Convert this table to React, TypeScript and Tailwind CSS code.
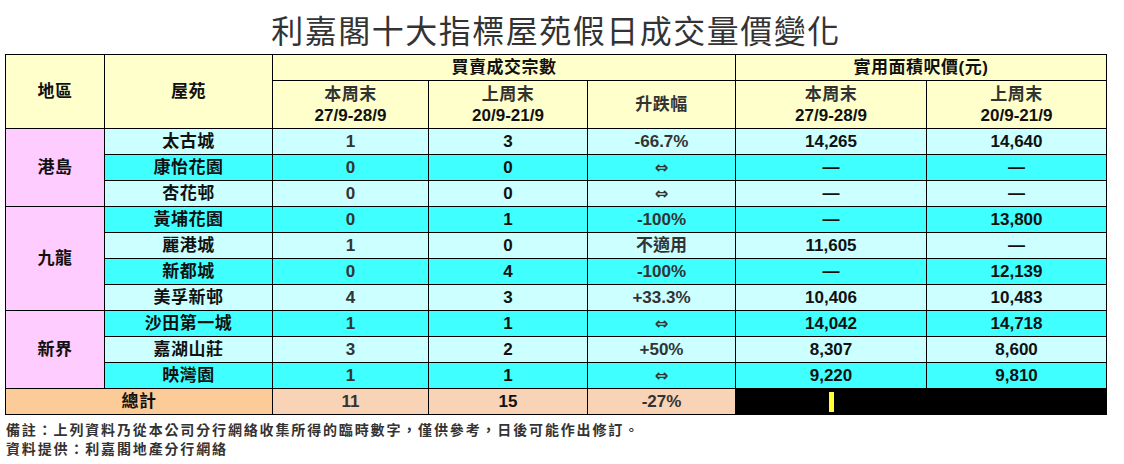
import React from 'react';

interface Row {
  region?: string;
  span?: number;
  name: string;
  thisWk: string;
  lastWk: string;
  change: string;
  priceNow: string;
  priceLast: string;
}

const rows: Row[] = [
  { region: '港島', span: 3, name: '太古城', thisWk: '1', lastWk: '3', change: '-66.7%', priceNow: '14,265', priceLast: '14,640' },
  { name: '康怡花園', thisWk: '0', lastWk: '0', change: '⇔', priceNow: '—', priceLast: '—' },
  { name: '杏花邨', thisWk: '0', lastWk: '0', change: '⇔', priceNow: '—', priceLast: '—' },
  { region: '九龍', span: 4, name: '黃埔花園', thisWk: '0', lastWk: '1', change: '-100%', priceNow: '—', priceLast: '13,800' },
  { name: '麗港城', thisWk: '1', lastWk: '0', change: '不適用', priceNow: '11,605', priceLast: '—' },
  { name: '新都城', thisWk: '0', lastWk: '4', change: '-100%', priceNow: '—', priceLast: '12,139' },
  { name: '美孚新邨', thisWk: '4', lastWk: '3', change: '+33.3%', priceNow: '10,406', priceLast: '10,483' },
  { region: '新界', span: 3, name: '沙田第一城', thisWk: '1', lastWk: '1', change: '⇔', priceNow: '14,042', priceLast: '14,718' },
  { name: '嘉湖山莊', thisWk: '3', lastWk: '2', change: '+50%', priceNow: '8,307', priceLast: '8,600' },
  { name: '映灣園', thisWk: '1', lastWk: '1', change: '⇔', priceNow: '9,220', priceLast: '9,810' },
];

const cell = 'border border-black text-center align-middle p-0';

export default function App() {
  return (
    <div className="w-[1124px] h-[464px] bg-white font-['Liberation_Sans','Noto_Sans_CJK_TC',sans-serif] text-[#111]">
      <div className="h-[54px] flex items-center justify-center pt-[4px] pr-[12px]">
        <h1 className="text-[32px] font-normal tracking-[1.5px] text-[#333] font-['Noto_Sans_CJK_TC',sans-serif] leading-none">
          利嘉閣十大指標屋苑假日成交量價變化
        </h1>
      </div>

      <table className="ml-[5px] w-[1102px] table-fixed border-collapse text-[17px] font-bold leading-none">
        <colgroup>
          <col className="w-[99px]" />
          <col className="w-[168px]" />
          <col className="w-[156px]" />
          <col className="w-[159px]" />
          <col className="w-[148px]" />
          <col className="w-[191px]" />
          <col className="w-[180px]" />
        </colgroup>
        <thead className="bg-[#FFFFCC]">
          <tr className="h-[26px]">
            <th rowSpan={2} className={`${cell} tracking-[0.5px]`}>地區</th>
            <th rowSpan={2} className={`${cell} tracking-[0.5px]`}>屋苑</th>
            <th colSpan={3} className={`${cell} tracking-[0.5px]`}>買賣成交宗數</th>
            <th colSpan={2} className={`${cell} tracking-[0.5px]`}>實用面積呎價(元)</th>
          </tr>
          <tr className="h-[48px]">
            <th className={cell}>
              <div className="text-[#333] tracking-[0.5px] mb-[4px]">本周末</div>
              <div>27/9-28/9</div>
            </th>
            <th className={cell}>
              <div className="text-[#333] tracking-[0.5px] mb-[4px]">上周末</div>
              <div>20/9-21/9</div>
            </th>
            <th className={`${cell} text-[#333] tracking-[0.5px]`}>升跌幅</th>
            <th className={cell}>
              <div className="text-[#333] tracking-[0.5px] mb-[4px]">本周末</div>
              <div>27/9-28/9</div>
            </th>
            <th className={cell}>
              <div className="text-[#333] tracking-[0.5px] mb-[4px]">上周末</div>
              <div>20/9-21/9</div>
            </th>
          </tr>
        </thead>
        <tbody>
          {rows.map((r, i) => {
            const bg = i % 2 === 0 ? 'bg-[#CCFFFF]' : 'bg-[#40FFFF]';
            const isArrow = r.change === '⇔';
            return (
              <tr key={r.name} className="h-[26px]">
                {r.region && (
                  <td rowSpan={r.span} className={`${cell} bg-[#FFCCFF] tracking-[0.5px]`}>
                    {r.region}
                  </td>
                )}
                <td className={`${cell} ${bg} tracking-[0.5px]`}>{r.name}</td>
                <td className={`${cell} ${bg} text-[#333]`}>{r.thisWk}</td>
                <td className={`${cell} ${bg}`}>{r.lastWk}</td>
                <td className={`${cell} ${bg} text-[#333] ${isArrow ? "text-[16px] font-['DejaVu_Sans',sans-serif]" : ''}`}>
                  {r.change}
                </td>
                <td className={`${cell} ${bg}`}>{r.priceNow}</td>
                <td className={`${cell} ${bg}`}>{r.priceLast}</td>
              </tr>
            );
          })}
          <tr className="h-[26px]">
            <td colSpan={2} className={`${cell} bg-[#FBCB98] tracking-[0.5px]`}>總計</td>
            <td className={`${cell} bg-[#F8D3B5] text-[#333]`}>11</td>
            <td className={`${cell} bg-[#F8D3B5]`}>15</td>
            <td className={`${cell} bg-[#F8D3B5] text-[#333]`}>-27%</td>
            <td className={`${cell} bg-black`}>
              <div className="mx-auto w-[5px] h-[20px] bg-[#FFFF33]" />
            </td>
            <td className={`${cell} bg-black`} />
          </tr>
        </tbody>
      </table>

      <div className="mt-[5px] ml-[6px] text-[14px] font-bold text-[#333] leading-[19px] tracking-[1.85px] font-['Noto_Sans_CJK_TC',sans-serif]">
        <p>備註：上列資料乃從本公司分行網絡收集所得的臨時數字，僅供參考，日後可能作出修訂。</p>
        <p>資料提供：利嘉閣地產分行網絡</p>
      </div>
    </div>
  );
}
